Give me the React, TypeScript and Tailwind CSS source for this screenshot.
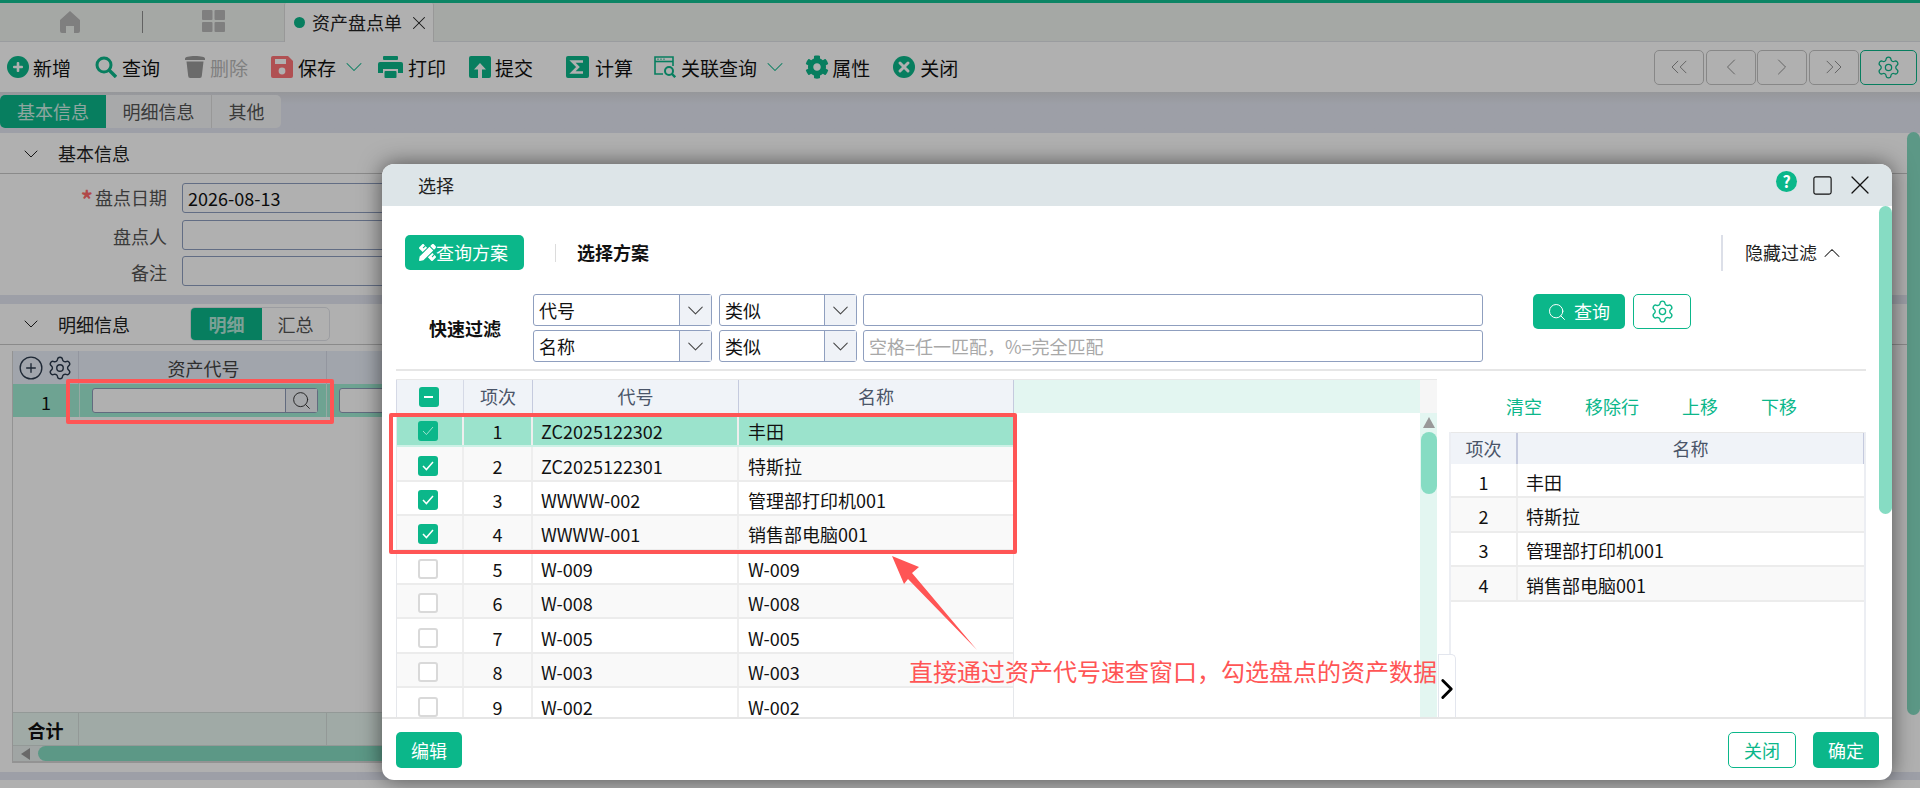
import { ChevronDown, ChevronLeft, ChevronRight, ChevronUp, ChevronsLeft, ChevronsRight, CirclePlus, Search, Settings, Square, X } from "lucide-react";
import type { ReactNode } from "react";
import { FaCog, FaPencilRuler } from "react-icons/fa";

const GREEN = "#0bb78a";

// Toolbar icons
function PlusIcon() {
  return (
    <svg width="22" height="22" viewBox="0 0 22 22">
      <circle cx="11" cy="11" r="11" fill={GREEN} />
      <rect x="6" y="9.7" width="10" height="2.6" rx="1" fill="#fff" />
      <rect x="9.7" y="6" width="2.6" height="10" rx="1" fill="#fff" />
    </svg>
  );
}

function FindIcon() {
  return (
    <svg width="22" height="22" viewBox="0 0 22 22" fill="none" stroke={GREEN}>
      <circle cx="9" cy="9" r="7" strokeWidth="3" />
      <path d="M14 14l7 7" strokeWidth="3.4" />
    </svg>
  );
}

function TrashIcon() {
  return (
    <svg width="20" height="22" viewBox="0 0 20 22" fill="#9a9a9a">
      <path d="M0 2.5C0 1 4 0 10 0s10 1 10 2.5V4H0z" />
      <path d="M1.5 5.5h17L16.8 20a2 2 0 0 1-2 2H5.2a2 2 0 0 1-2-2z" />
    </svg>
  );
}

function SaveIcon() {
  return (
    <svg width="22" height="22" viewBox="0 0 22 22">
      <path d="M2 0h15l5 5v15a2 2 0 0 1-2 2H2a2 2 0 0 1-2-2V2a2 2 0 0 1 2-2z" fill="#ff7478" />
      <rect x="4" y="3" width="11" height="5" fill="#fff" />
      <circle cx="11" cy="15" r="3.4" fill="#fff" />
    </svg>
  );
}

function PrintIcon() {
  return (
    <svg width="25" height="22" viewBox="0 0 25 22" fill={GREEN}>
      <rect x="5" y="0" width="15" height="4" rx="1" />
      <path d="M2 6h21a2 2 0 0 1 2 2v9h-5v-4H5v4H0V8a2 2 0 0 1 2-2z" />
      <rect x="6.5" y="15" width="12" height="7" rx="1" />
    </svg>
  );
}

function SubmitIcon() {
  return (
    <svg width="22" height="22" viewBox="0 0 22 22">
      <rect width="22" height="22" rx="2" fill={GREEN} />
      <path d="M11 7l6 6.5h-4V22H9v-8.5H5z" fill="#fff" />
    </svg>
  );
}

function SigmaIcon() {
  return (
    <svg width="23" height="22" viewBox="0 0 23 22">
      <rect width="23" height="22" rx="2" fill={GREEN} />
      <path d="M17 5.5H6.5l5.5 5.5-5.5 5.5H17" fill="none" stroke="#fff" strokeWidth="2.6" />
    </svg>
  );
}

function RelationIcon() {
  return (
    <svg width="22" height="22" viewBox="0 0 22 22" fill="none" stroke={GREEN}>
      <path d="M9 18H1V1h18v9" strokeWidth="1.6" />
      <path d="M1 5.5h18" strokeWidth="1.6" />
      <path d="M3.5 3.2h1M6.5 3.2h1M9.5 3.2h1" strokeWidth="1.6" />
      <circle cx="15" cy="15" r="4" strokeWidth="2" />
      <path d="M18 18l3.2 3.2" strokeWidth="2.4" />
    </svg>
  );
}

function CloseIcon() {
  return (
    <svg width="22" height="22" viewBox="0 0 22 22">
      <circle cx="11" cy="11" r="11" fill={GREEN} />
      <path d="M7 7l8 8M15 7l-8 8" stroke="#fff" strokeWidth="3" strokeLinecap="round" />
    </svg>
  );
}

function ToolItem({ icon, label, gap, className, muted, arrow }: { icon: ReactNode; label: string; gap: string; className: string; muted?: boolean; arrow?: boolean }) {
  return (
    <div className={`flex items-center text-[19px] ${gap} ${className} ${muted ? "text-[#b9b9b9]" : "text-[#111]"}`}>
      <span className="flex items-center">{icon}</span>
      <span className="leading-none">{label}</span>
      {arrow && <ChevronDown size={28} strokeWidth={0.9} color={GREEN} className="ml-[-1px] mr-[-7px]" />}
    </div>
  );
}

function PagerButton({ children }: { children: ReactNode }) {
  return (
    <div className="w-[50px] h-[35px] flex items-center justify-center rounded-[5px] border border-[#c4c4c4] text-[#8a8a8a]">
      {children}
    </div>
  );
}

function FormRow({ label, value, required }: { label: string; value?: string; required?: boolean }) {
  return (
    <div className="flex items-center h-[30px] gap-[15px]">
      <div className="w-[167px] text-right text-[18px] text-[#555] leading-none pt-[2px]">
        {required && <span className="text-[#ff6b6b] text-[24px] leading-none font-bold mr-[2px] align-[-4px]">*</span>}
        {label}
      </div>
      <div className="flex-1 h-full rounded-[3px] border border-[#8f9fbf] px-[5px] pt-[1px] flex items-center text-[18px] text-[#111]">
        {value}
      </div>
    </div>
  );
}

function Checkbox({ checked, dash, pale }: { checked?: boolean; dash?: boolean; pale?: boolean }) {
  if (dash) {
    return (
      <div className="w-5 h-5 rounded-[3px] bg-[#0bb78a] flex items-center justify-center">
        <div className="w-[9px] h-[2px] bg-white" />
      </div>
    );
  }
  if (checked) {
    return (
      <div className="w-5 h-5 rounded-[3px] bg-[#0bb78a] flex items-center justify-center">
        <svg width="12" height="10" viewBox="0 0 12 10" fill="none" stroke="#fff" strokeWidth={pale ? 1 : 1.5} opacity={pale ? 0.6 : 1}>
          <path d="M1 5l3.4 3.6L11 1" />
        </svg>
      </div>
    );
  }
  return <div className="w-5 h-5 rounded-[3px] bg-white border-2 border-[#d9d9d9]" />;
}

function SelectBox({ text, wide }: { text: string; wide?: boolean }) {
  return (
    <div className={`h-full flex rounded-[3px] border border-[#8f9fbf] bg-white ${wide ? "w-[179px]" : "w-[138px]"}`}>
      <div className="flex-1 flex items-center px-[5px] pt-[1px] text-[18px] text-[#111]">{text}</div>
      <div className="w-[32px] flex items-center justify-center border-l border-[#8f9fbf] bg-[#eff2f7]">
        <ChevronDown size={27} strokeWidth={0.9} color="#444" />
      </div>
    </div>
  );
}

const leftRows = [
  { code: "ZC2025122302", name: "丰田", checked: true },
  { code: "ZC2025122301", name: "特斯拉", checked: true },
  { code: "WWWW-002", name: "管理部打印机001", checked: true },
  { code: "WWWW-001", name: "销售部电脑001", checked: true },
  { code: "W-009", name: "W-009" },
  { code: "W-008", name: "W-008" },
  { code: "W-005", name: "W-005" },
  { code: "W-003", name: "W-003" },
  { code: "W-002", name: "W-002" },
];

const rightRows = ["丰田", "特斯拉", "管理部打印机001", "销售部电脑001"];

function SelectDialog() {
  return (
    <div className="absolute left-[382px] top-[164px] w-[1510px] h-[616px] flex flex-col rounded-xl overflow-hidden bg-white shadow-[0_0_22px_rgba(0,0,0,0.55)]">
      {/* Title bar */}
      <div className="h-[42px] shrink-0 flex items-center bg-[#dde5e8] pl-[36px] text-[18px] text-[#222]">
        <span>选择</span>
        <div className="ml-auto flex items-center mr-[16px]">
          <div className="w-[21px] h-[21px] rounded-full bg-[#0bb78a] text-white text-[16px] font-bold flex items-center justify-center mb-[8px] leading-none">?</div>
          <Square size={23} strokeWidth={1.2} color="#111" className="ml-[14px]" />
          <X size={32} strokeWidth={0.95} color="#111" className="ml-[10px]" />
        </div>
      </div>

      {/* Body */}
      <div className="relative flex-1 min-h-0 pl-[14px] pr-[26px]">
        <div className="absolute right-0 top-0 w-[13px] h-[308px] rounded-t-[7px] rounded-b-[7px] bg-[#86dcc3]" />

        {/* Plan row */}
        <div className="flex items-center h-[35px] mt-[29px]">
          <div className="ml-[9px] w-[119px] h-[35px] rounded-[5px] bg-[#0bb78a] text-white text-[18px] flex items-center pl-[14px]">
            <FaPencilRuler size={17} />
            <span>查询方案</span>
          </div>
          <div className="ml-[31px] w-px h-[18px] bg-[#dcdcdc]" />
          <div className="ml-[21px] text-[18px] font-bold text-[#111]">选择方案</div>
          <div className="ml-auto w-[2px] h-[36px] bg-[#dcdfe8]" />
          <div className="ml-[22px] mr-[20px] flex items-center text-[18px] text-[#222]">
            隐藏过滤
            <ChevronUp size={28} strokeWidth={0.9} color="#333" className="ml-[1px]" />
          </div>
        </div>

        {/* Quick filter */}
        <div className="flex mt-[24px] h-[68px]">
          <div className="w-[137px] pl-[33px] flex items-center text-[18px] font-bold text-[#111]">快速过滤</div>
          <div className="w-[950px] flex flex-col gap-[4px]">
            <div className="flex h-[32px] gap-[7px]">
              <SelectBox text="代号" wide />
              <SelectBox text="类似" />
              <div className="flex-1 rounded-[3px] border border-[#8f9fbf] ml-[-1px]" />
            </div>
            <div className="flex h-[32px] gap-[7px]">
              <SelectBox text="名称" wide />
              <SelectBox text="类似" />
              <div className="flex-1 rounded-[3px] border border-[#8f9fbf] ml-[-1px] px-[5px] pt-[1px] flex items-center text-[18px] text-[#a8a8a8]">{"空格=任一匹配\uFF0C%=完全匹配"}</div>
            </div>
          </div>
          <div className="ml-[50px] mt-0 w-[92px] h-[35px] rounded-[5px] bg-[#0bb78a] text-white text-[18px] flex items-center pl-[14px] gap-[7px]">
            <Search size={20} strokeWidth={1.2} />
            查询
          </div>
          <div className="ml-[8px] w-[58px] h-[35px] rounded-[5px] border border-[#0bb78a] flex items-center justify-center">
            <Settings size={25} strokeWidth={1.3} color={GREEN} />
          </div>
        </div>

        <div className="mt-[7px] h-[2px] bg-[#e6e6e6]" />

        {/* Tables */}
        <div className="relative flex mt-[8px] h-[338px]">
          <div className="w-[1041px] h-full flex flex-col overflow-hidden">
            <div className="flex h-[34px] shrink-0 bg-[#f0f3f8] text-[18px] text-[#4a5568] border-t border-[#e8e8e8]">
              <div className="w-[68px] flex items-center justify-center border-x border-[#d5d9e6] pr-[3px]"><Checkbox dash /></div>
              <div className="w-[69px] flex items-center justify-center border-r border-[#c5cade]">项次</div>
              <div className="w-[206px] flex items-center justify-center border-r border-[#c5cade]">代号</div>
              <div className="w-[275px] flex items-center justify-center border-r border-[#c5cade]">名称</div>
              <div className="flex-1 bg-[#e3f6f1]" />
              <div className="w-[17px] bg-[#f6f6f6]" />
            </div>
            <div className="flex flex-1 min-h-0">
              <div className="w-[618px] border-l border-r border-[#e5e7eb] overflow-hidden">
                {leftRows.map((row, i) => {
                  // the last row is cut short by the table's bottom edge
                  const last = i === leftRows.length - 1;
                  const pad = last ? "pt-[8px]" : "pt-[4px]";
                  return (
                    <div key={row.code} className={`flex text-[18px] leading-none text-[#111] ${last ? "h-[29px]" : "h-[34.4px] border-b-2"} ${i === 0 ? "bg-[#9be3cc] border-white/50" : i % 2 === 1 ? "bg-[#f9f9f9] border-[#ececec]" : "bg-white border-[#ececec]"}`}>
                      <div className={`w-[67px] flex items-center justify-center border-r-2 border-[#eeeeee] pr-[3px] ${pad}`}><Checkbox checked={row.checked} pale={i === 0} /></div>
                      <div className={`w-[69px] flex items-center justify-center border-r-2 border-[#eeeeee] ${pad}`}>{i + 1}</div>
                      <div className={`w-[206px] flex items-center pl-[8px] border-r-2 border-[#eeeeee] ${pad}`}>{row.code}</div>
                      <div className={`flex-1 flex items-center pl-[9px] ${pad}`}>{row.name}</div>
                    </div>
                  );
                })}
              </div>
              <div className="flex-1" />
              <div className="w-[17px] flex flex-col items-center bg-[#e3f6f1] pt-[4px]">
                <div className="w-0 h-0 border-x-[6px] border-x-transparent border-b-[11px] border-b-[#999]" />
                <div className="mt-[4px] w-[16px] h-[62px] rounded-[8px] bg-[#86dcc3]" />
              </div>
            </div>
          </div>

          {/* Picked list */}
          <div className="ml-[12px] flex-1 flex flex-col">
            <div className="h-[53px] shrink-0 flex items-center pl-[57px] gap-[43px] text-[18px] text-[#0bb78a] pt-[1px]">
              <span>清空</span>
              <span>移除行</span>
              <span>上移</span>
              <span>下移</span>
            </div>
            <div className="flex-1 border-x-2 border-[#eceef3]">
              <div className="flex h-[32px] bg-[#f0f3f8] text-[18px] text-[#4a5568] border-t border-[#e8e8e8]">
                <div className="w-[67px] flex items-center justify-center border-r-2 border-[#c5cade]">项次</div>
                <div className="flex-1 flex items-center justify-center border-r border-[#c5cade]">名称</div>
              </div>
              {rightRows.map((name, i) => (
                <div key={name} className={`flex h-[34.4px] text-[18px] text-[#111] border-b-2 border-[#ececec] ${i % 2 === 1 ? "bg-[#f9f9f9]" : "bg-white"}`}>
                  <div className="w-[67px] flex items-center justify-center border-r-2 border-[#eeeeee] pt-[4px]">{i + 1}</div>
                  <div className="flex-1 flex items-center pl-[8px] pt-[4px]">{name}</div>
                </div>
              ))}
            </div>
          </div>

          {/* Collapse handle */}
          <div className="absolute left-[1042px] bottom-0 w-[18px] h-[63px] bg-white border-x border-t border-[#e3e6ee] rounded-tr-[5px] flex items-center justify-center pt-[5px]">
            <ChevronRight size={34} strokeWidth={2} color="#000" className="shrink-0" />
          </div>
        </div>
      </div>

      {/* Footer */}
      <div className="h-[63px] shrink-0 flex items-start pt-[13px] pl-[14px] pr-[13px] border-t-2 border-[#e6e6e6]">
        <div className="w-[66px] h-[36px] rounded-[5px] bg-[#0bb78a] text-white text-[18px] flex items-center justify-center">编辑</div>
        <div className="ml-auto w-[68px] h-[36px] rounded-[5px] border border-[#0bb78a] text-[#0bb78a] text-[18px] flex items-center justify-center">关闭</div>
        <div className="ml-[17px] w-[66px] h-[36px] rounded-[5px] bg-[#0bb78a] text-white text-[18px] flex items-center justify-center">确定</div>
      </div>
    </div>
  );
}

export default function App() {
  return (
    <div className="relative w-[1920px] h-[788px] overflow-hidden bg-white" style={{ fontFamily: '"Noto Sans CJK SC", "Noto Sans", sans-serif' }}>
      {/* Page behind the dialog */}
      <div className="h-full flex flex-col">
        <div className="h-[3px] shrink-0 bg-[#12c193]" />

        {/* Tab bar */}
        <div className="h-[39px] shrink-0 flex bg-[#f0f3f0] border-b border-[#e0e2e6]">
          <div className="w-[142px] flex items-center justify-center pr-[2px] pb-[1px]">
            <svg width="20" height="22" viewBox="0 0 20 22" fill="#b9b9b9">
              <path d="M10 0l10 9v11a2 2 0 0 1-2 2h-4v-7H6v7H2a2 2 0 0 1-2-2V9z" />
            </svg>
          </div>
          <div className="w-px h-[22px] mt-[8px] bg-[#8f8f8f]" />
          <div className="w-[141px] flex items-center justify-center pb-[2px]">
            <svg width="23" height="22" viewBox="0 0 23 22" fill="#b9b9b9">
              <rect width="10.5" height="10" rx="1" />
              <rect x="12.5" width="10.5" height="10" rx="1" />
              <rect y="12" width="10.5" height="10" rx="1" />
              <rect x="12.5" y="12" width="10.5" height="10" rx="1" />
            </svg>
          </div>
          <div className="w-[150px] h-[39px] flex items-center pl-[9px] bg-white border-x border-[#dcdcdc] text-[18px] text-[#222] rounded-t-[2px]">
            <span className="w-[11px] h-[11px] rounded-full bg-[#0bb78a] mr-[7px]" />
            资产盘点单
            <X size={22} strokeWidth={1.1} className="ml-[6px]" />
          </div>
        </div>

        {/* Toolbar */}
        <div className="h-[50px] shrink-0 flex items-center bg-white">
          <ToolItem icon={<PlusIcon />} label="新增" gap="gap-[4px]" className="ml-[7px]" />
          <ToolItem icon={<FindIcon />} label="查询" gap="gap-[5px]" className="ml-[24px]" />
          <ToolItem icon={<TrashIcon />} label="删除" gap="gap-[5px]" className="ml-[25px]" muted />
          <ToolItem icon={<SaveIcon />} label="保存" gap="gap-[5px]" className="ml-[23px]" arrow />
          <ToolItem icon={<PrintIcon />} label="打印" gap="gap-[5px]" className="ml-[17px]" />
          <ToolItem icon={<SubmitIcon />} label="提交" gap="gap-[4px]" className="ml-[23px]" />
          <ToolItem icon={<SigmaIcon />} label="计算" gap="gap-[6px]" className="ml-[33px]" />
          <ToolItem icon={<RelationIcon />} label="关联查询" gap="gap-[5px]" className="ml-[21px]" arrow />
          <ToolItem icon={<FaCog size={24} color={GREEN} />} label="属性" gap="gap-[3px]" className="ml-[23px]" />
          <ToolItem icon={<CloseIcon />} label="关闭" gap="gap-[5px]" className="ml-[23px]" />
          <div className="ml-auto mr-[3px] flex gap-[1.5px]">
            <PagerButton><ChevronsLeft size={28} strokeWidth={0.8} /></PagerButton>
            <PagerButton><ChevronLeft size={28} strokeWidth={0.8} /></PagerButton>
            <PagerButton><ChevronRight size={28} strokeWidth={0.8} /></PagerButton>
            <PagerButton><ChevronsRight size={28} strokeWidth={0.8} /></PagerButton>
            <div className="w-[57px] h-[35px] rounded-[5px] border border-[#0bb78a] flex items-center justify-center">
              <Settings size={25} strokeWidth={1.2} color={GREEN} />
            </div>
          </div>
        </div>

        {/* Section tabs */}
        <div className="h-[41px] shrink-0 bg-[#e4e7f2] pt-[3px] bg-gradient-to-b from-[#d9dbe0] to-[#e4e7f2] to-30%">
          <div className="flex w-[281px] h-[33px] rounded-[5px] overflow-hidden bg-[#f4f5f7] text-[18px] text-[#555]">
            <div className="w-[106px] flex items-center justify-center bg-[#0bb78a] text-white/80">基本信息</div>
            <div className="w-[106px] flex items-center justify-center border-r border-[#dcdcdc]">明细信息</div>
            <div className="flex-1 flex items-center justify-center">其他</div>
          </div>
        </div>

        {/* Basic info */}
        <div className="h-[162px] shrink-0 flex flex-col">
          <div className="h-[41px] shrink-0 flex items-center border-b border-[#c8c8c8] text-[18px] text-[#222] pt-[1px]">
            <ChevronDown size={24} strokeWidth={1} className="ml-[19px]" />
            <span className="ml-[15px]">基本信息</span>
          </div>
          <div className="pt-[9px] flex flex-col gap-[6.5px] pr-[40px]">
            <FormRow label="盘点日期" value="2026-08-13" required />
            <FormRow label="盘点人" />
            <FormRow label="备注" />
          </div>
        </div>
        <div className="h-[9px] shrink-0 bg-[#e4e7f2]" />

        {/* Detail info */}
        <div className="flex-1 min-h-0 flex flex-col">
          <div className="h-[41px] shrink-0 flex items-center border-b border-[#c8c8c8] text-[18px] text-[#222]">
            <ChevronDown size={24} strokeWidth={1} className="ml-[19px]" />
            <span className="ml-[15px]">明细信息</span>
            <div className="ml-[60px] flex w-[140px] h-[34px] rounded-[5px] border border-[#e2e4ea] overflow-hidden text-[#555]">
              <div className="w-[71px] flex items-center justify-center bg-[#0bb78a] text-white/70 font-bold">明细</div>
              <div className="flex-1 flex items-center justify-center">汇总</div>
            </div>
          </div>
          <div className="mt-[6px] ml-[12px] mr-[28px] h-[412px] flex flex-col border-l border-[#d5d5d5] text-[18px]">
            <div className="flex h-[33px] shrink-0 bg-[#eaf0f9] text-[#444]">
              <div className="w-[66px] flex items-center justify-center gap-[3px] border-r border-[#d5d9e6]">
                <CirclePlus size={26} strokeWidth={1.25} color="#2c3a4d" className="shrink-0" />
                <Settings size={26} strokeWidth={1.3} color="#2c3a4d" className="shrink-0" />
              </div>
              <div className="w-[248px] flex items-center justify-center border-r border-[#d5d9e6] pt-[2px] pl-[2px]">资产代号</div>
            </div>
            <div className="flex h-[33px] shrink-0 bg-[#a0ecd4] text-[#111]">
              <div className="w-[66px] flex items-center justify-center pt-[3px]">1</div>
              <div className="w-[248px] flex border-x border-[#d9f5ec] py-[4px] pl-[12px] pr-[8px]">
                <div className="flex-1 flex bg-white rounded-[3px] border border-[#8f9cb8]">
                  <div className="flex-1" />
                  <div className="w-[32px] flex items-center justify-center bg-[#eff2f7] border-l border-[#8f9cb8]">
                    <Search size={21} strokeWidth={1.1} color="#333" />
                  </div>
                </div>
              </div>
              <div className="flex-1 py-[4px] pl-[12px]">
                <div className="h-full bg-white rounded-[3px] border border-[#8f9cb8]" />
              </div>
            </div>
            <div className="flex-1" />
            <div className="flex h-[34px] shrink-0 bg-[#e8f6f1] border-y border-[#d5dedb] font-bold text-[#111]">
              <div className="w-[66px] flex items-center justify-center border-r border-[#d5dedb] pt-[2px]">合计</div>
              <div className="w-[248px] border-r border-[#d5dedb]" />
            </div>
            <div className="flex items-center h-[17px] shrink-0 bg-[#e8f0ee] border-b-2 border-[#d5d5d5]">
              <div className="w-0 h-0 ml-[8px] border-y-[6px] border-y-transparent border-r-[9px] border-r-[#999]" />
              <div className="ml-[8px] flex-1 h-[15px] rounded-[8px] bg-[#86dcc3]" />
            </div>
          </div>
          <div className="mt-[9px] h-[8px] shrink-0 bg-[#e4e7f2]" />
        </div>
      </div>

      {/* Page scrollbar */}
      <div className="absolute right-0 top-[132px] w-[13px] h-[583px] rounded-[7px] bg-[#86dcc3]" />

      {/* Mask */}
      <div className="absolute inset-0 bg-black/[0.31]" />

      <SelectDialog />

      {/* Annotations */}
      <div className="absolute left-[66px] top-[379px] w-[268px] h-[45px] border-[4px] border-[#ff5555] rounded-[2px]" />
      <div className="absolute left-[389px] top-[413px] w-[628px] h-[141px] border-[4px] border-[#ff5555] rounded-[2px]" />
      <svg className="absolute left-[885px] top-[550px]" width="100" height="105" viewBox="0 0 100 105">
        <polygon points="7,6 34,17 27,23 92,100 23,29 19,34" fill="#ff5555" />
      </svg>
      <div className="absolute left-[909px] top-[653px] text-[24px] leading-[36px] text-[#ff5555] whitespace-nowrap">{"直接通过资产代号速查窗口\uFF0C勾选盘点的资产数据"}</div>
    </div>
  );
}
